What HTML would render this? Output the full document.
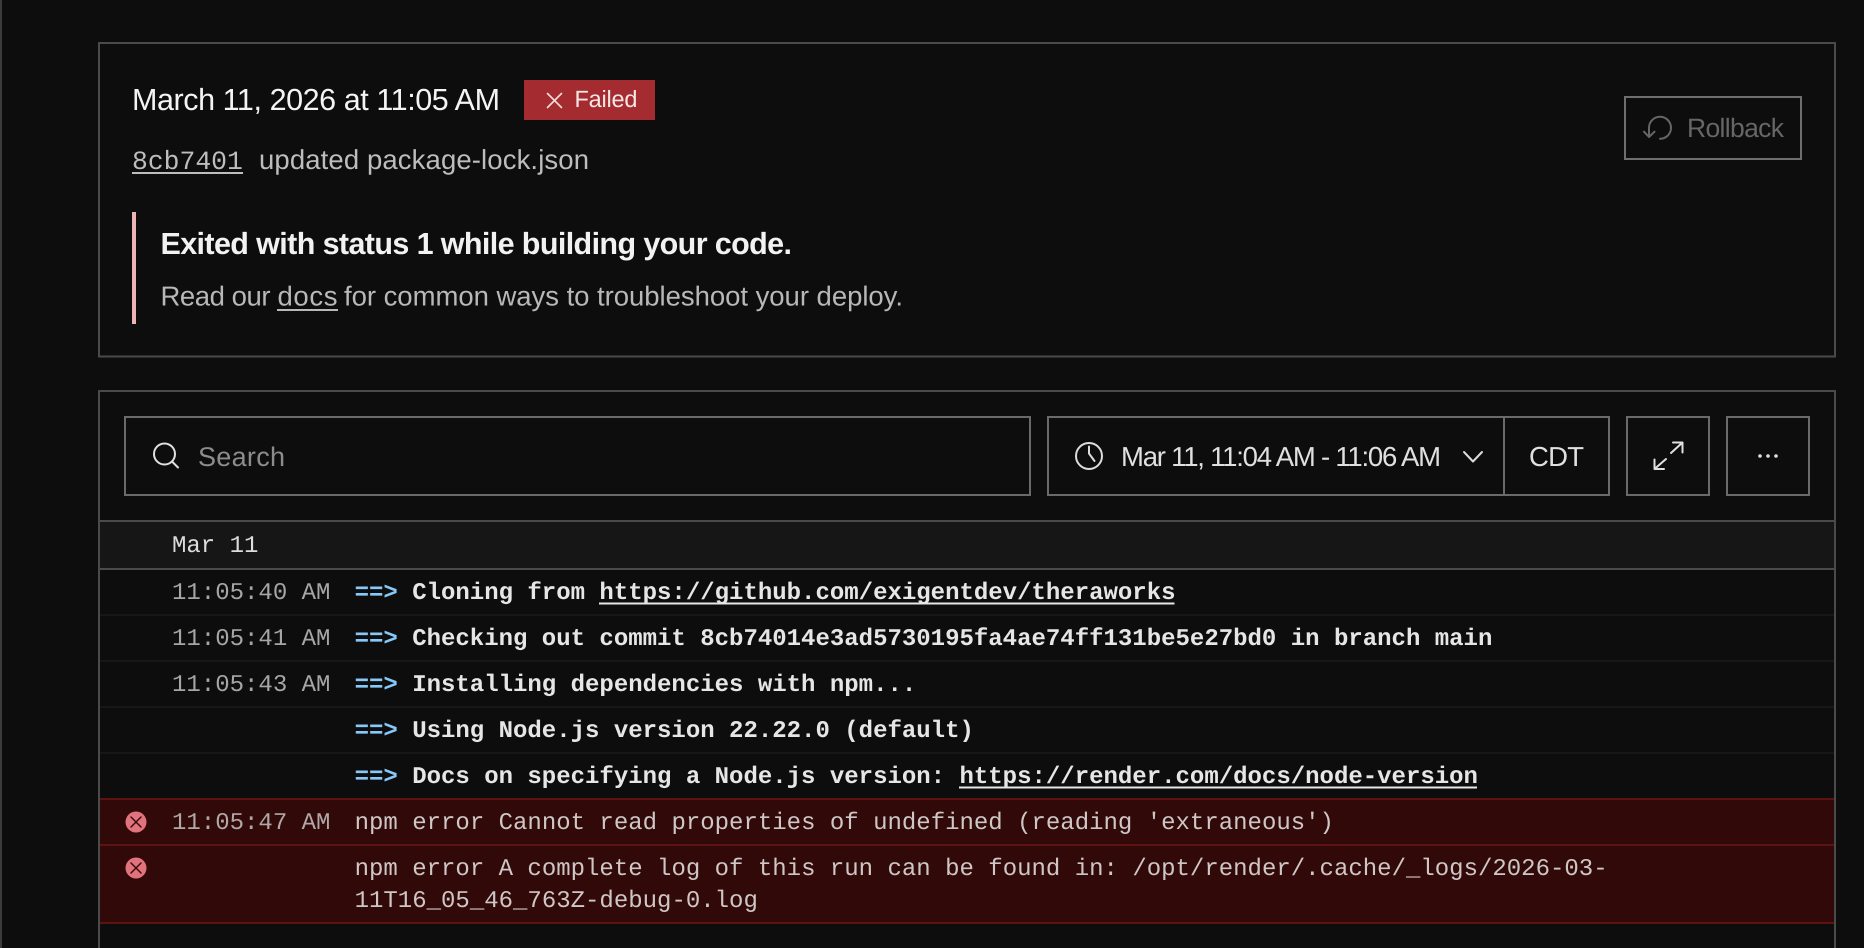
<!DOCTYPE html>
<html lang="en"><head><meta charset="utf-8"><title>Deploy failed</title>
<style>
html,body{margin:0;padding:0;background:#0d0d0d;width:1864px;height:948px;overflow:hidden}
svg{display:block;text-rendering:geometricPrecision}
text{white-space:pre}
.s{font-family:"Liberation Sans",sans-serif}
.m{font-family:"Liberation Mono",monospace;font-size:24px}
.b{font-weight:700;fill:#e6e6e6}
.a{font-weight:700;fill:#86c8f8}
.t{fill:#a6a6a6}
.e{fill:#cfc6c6}
.i{fill:none;stroke-linecap:round;stroke-linejoin:round}
</style></head><body>
<svg width="1864" height="948" viewBox="0 0 1864 948" xmlns="http://www.w3.org/2000/svg">
<rect width="1864" height="948" fill="#0d0d0d"/>
<rect x="0" y="0" width="2" height="948" fill="#3c3c3c"/>

<!-- deploy panel -->
<rect x="99" y="43" width="1736" height="313.500" fill="#0d0d0d" stroke="#4a4a4a" stroke-width="2"/>
<text class="s" x="132" y="110" font-size="30.500" fill="#f4f4f4" textLength="368" lengthAdjust="spacing">March 11, 2026 at 11:05 AM</text>
<rect x="524" y="80" width="131" height="40" fill="#a42c30"/>
<path class="i" d="M547.500 93.500L561.500 107.500M561.500 93.500L547.500 107.500" stroke="#f3dcdc" stroke-width="1.600"/>
<text class="s" x="574.500" y="107" font-size="23.500" fill="#f6e6e6" textLength="63" lengthAdjust="spacing">Failed</text>
<text class="m" x="132" y="169" style="font-size:26.400px" fill="#bdbdbd">8cb7401</text>
<rect x="132" y="172" width="111" height="2" fill="#bdbdbd"/>
<text class="s" x="259" y="169" font-size="27.500" fill="#bdbdbd" textLength="330" lengthAdjust="spacing">updated package-lock.json</text>

<rect x="132" y="212" width="4" height="112" fill="#e9b5b5"/>
<text class="s" x="160.500" y="254" font-size="30.500" font-weight="700" fill="#f2f2f2" textLength="631.500" lengthAdjust="spacing">Exited with status 1 while building your code.</text>
<text class="s" x="160.500" y="305.500" font-size="27.500" fill="#b8b8b8" textLength="110" lengthAdjust="spacing">Read our</text>
<text class="s" x="277.500" y="305.500" font-size="27.500" fill="#b8b8b8" textLength="60" lengthAdjust="spacing">docs</text>
<rect x="277" y="309" width="61" height="2" fill="#b8b8b8"/>
<text class="s" x="344" y="305.500" font-size="27.500" fill="#b8b8b8" textLength="559" lengthAdjust="spacing">for common ways to troubleshoot your deploy.</text>

<rect x="1625" y="97" width="176" height="62" fill="none" stroke="#6e6e6e" stroke-width="2"/>
<path class="i" d="M1649 137V127.500A11 11 0 1 1 1660 138.800M1644 131.700L1649 137L1654.500 131.700" stroke="#666" stroke-width="2"/>
<text class="s" x="1687" y="137" font-size="26.500" fill="#666" textLength="97" lengthAdjust="spacing">Rollback</text>

<!-- logs panel -->
<rect x="99" y="391" width="1736" height="600" fill="#0d0d0d" stroke="#4a4a4a" stroke-width="2"/>

<rect x="125" y="417" width="905" height="78" fill="none" stroke="#6a6a6a" stroke-width="2"/>
<circle cx="164.500" cy="454" r="10.500" fill="none" stroke="#e0e0e0" stroke-width="2"/>
<path class="i" d="M172 461.500L178 467.500" stroke="#e0e0e0" stroke-width="2"/>
<text class="s" x="198" y="466" font-size="27" fill="#8c8c8c" textLength="87" lengthAdjust="spacing">Search</text>

<rect x="1048" y="417" width="561" height="78" fill="none" stroke="#6a6a6a" stroke-width="2"/>
<rect x="1503" y="417" width="2" height="78" fill="#6a6a6a"/>
<circle cx="1089" cy="456" r="13" fill="none" stroke="#dcdcdc" stroke-width="2"/>
<path class="i" d="M1089 446.500V453.500L1094.500 461" stroke="#dcdcdc" stroke-width="2"/>
<text class="s" x="1121" y="466" font-size="27.500" fill="#e0e0e0" textLength="320" lengthAdjust="spacing">Mar 11, 11:04 AM - 11:06 AM</text>
<path class="i" d="M1464 452L1473 461.500L1482 452" stroke="#dcdcdc" stroke-width="2"/>
<text class="s" x="1529" y="466" font-size="27.500" fill="#e0e0e0" textLength="55" lengthAdjust="spacing">CDT</text>

<rect x="1627" y="417" width="82" height="78" fill="none" stroke="#6a6a6a" stroke-width="2"/>
<path class="i" d="M1671 453L1682.500 442.500M1673 442.500H1682.500V452.500M1666 459L1654.500 469M1654.500 459.500V469H1664" stroke="#e0e0e0" stroke-width="2"/>
<rect x="1727" y="417" width="82" height="78" fill="none" stroke="#6a6a6a" stroke-width="2"/>
<circle cx="1760" cy="456" r="1.800" fill="#e0e0e0"/><circle cx="1768" cy="456" r="1.800" fill="#e0e0e0"/><circle cx="1776" cy="456" r="1.800" fill="#e0e0e0"/>

<rect x="100" y="520" width="1734" height="50" fill="#161616"/>
<rect x="100" y="520" width="1734" height="2" fill="#4a4a4a"/>
<rect x="100" y="568" width="1734" height="2" fill="#4a4a4a"/>
<text class="m" x="172" y="552" fill="#dcdcdc">Mar 11</text>

<rect x="100" y="614" width="1734" height="2" fill="#171717"/>
<rect x="100" y="660" width="1734" height="2" fill="#171717"/>
<rect x="100" y="706" width="1734" height="2" fill="#171717"/>
<rect x="100" y="752" width="1734" height="2" fill="#171717"/>

<text class="m t" x="172" y="599">11:05:40 AM</text>
<text class="m a" x="354.600" y="599">==&gt;</text>
<text class="m b" x="412.200" y="599">Cloning from https://github.com/exigentdev/theraworks</text>
<rect x="599" y="602.500" width="575.500" height="2" fill="#e6e6e6"/>

<text class="m t" x="172" y="645">11:05:41 AM</text>
<text class="m a" x="354.600" y="645">==&gt;</text>
<text class="m b" x="412.200" y="645">Checking out commit 8cb74014e3ad5730195fa4ae74ff131be5e27bd0 in branch main</text>

<text class="m t" x="172" y="691">11:05:43 AM</text>
<text class="m a" x="354.600" y="691">==&gt;</text>
<text class="m b" x="412.200" y="691">Installing dependencies with npm...</text>

<text class="m a" x="354.600" y="737">==&gt;</text>
<text class="m b" x="412.200" y="737">Using Node.js version 22.22.0 (default)</text>

<text class="m a" x="354.600" y="783">==&gt;</text>
<text class="m b" x="412.200" y="783">Docs on specifying a Node.js version: https://render.com/docs/node-version</text>
<rect x="959" y="786.500" width="518" height="2" fill="#e6e6e6"/>

<rect x="100" y="798" width="1734" height="126" fill="#310909"/>
<rect x="100" y="798" width="1734" height="2" fill="#5e1313"/>
<rect x="100" y="844" width="1734" height="2" fill="#5e1313"/>
<rect x="100" y="922" width="1734" height="2" fill="#5e1313"/>

<circle cx="136" cy="822" r="10.500" fill="#e1737c"/>
<path class="i" d="M131 817L141 827M141 817L131 827" stroke="#3a0b0e" stroke-width="1.500"/>
<text class="m t" x="172" y="829" style="fill:#b0a8a8">11:05:47 AM</text>
<text class="m e" x="354.600" y="829">npm error Cannot read properties of undefined (reading 'extraneous')</text>

<circle cx="136" cy="868" r="10.500" fill="#e1737c"/>
<path class="i" d="M131 863L141 873M141 863L131 873" stroke="#3a0b0e" stroke-width="1.500"/>
<text class="m e" x="354.600" y="875">npm error A complete log of this run can be found in: /opt/render/.cache/_logs/2026-03-</text>
<text class="m e" x="354.600" y="907">11T16_05_46_763Z-debug-0.log</text>
</svg>
</body></html>
